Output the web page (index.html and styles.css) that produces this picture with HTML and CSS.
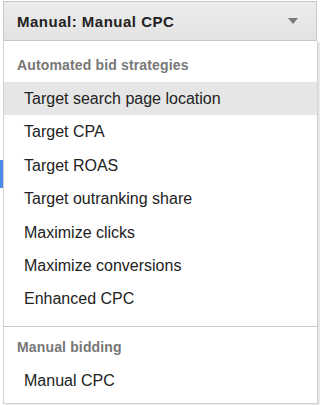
FILE: index.html
```html
<!DOCTYPE html>
<html>
<head>
<meta charset="utf-8">
<link rel="stylesheet" href="styles.css">
</head>
<body>
<div class="page">
  <div class="backdrop-mark"></div>
  <div class="dropdown">
    <div class="select">
      <span class="select-label">Manual: Manual CPC</span>
      <svg class="arrow" width="10" height="6" viewBox="0 0 10 6"><path d="M0 0H10L5 6Z" fill="#7a7a7a"/></svg>
    </div>
    <div class="menu">
      <div class="group-title">Automated bid strategies</div>
      <div class="item active">Target search page location</div>
      <div class="item">Target CPA</div>
      <div class="item">Target ROAS</div>
      <div class="item">Target outranking share</div>
      <div class="item">Maximize clicks</div>
      <div class="item">Maximize conversions</div>
      <div class="item">Enhanced CPC</div>
      <div class="divider"></div>
      <div class="group-title second">Manual bidding</div>
      <div class="item">Manual CPC</div>
    </div>
  </div>
</div>
</body>
</html>
```

FILE: styles.css
```css
html, body {
  margin: 0;
  padding: 0;
  background: #ffffff;
}

.page {
  position: relative;
  width: 320px;
  height: 405px;
  overflow: hidden;
  font-family: "Liberation Sans", Arial, sans-serif;
}

.backdrop-mark {
  position: absolute;
  left: 0;
  top: 160px;
  width: 3px;
  height: 28px;
  background: #4d8ae8;
}

.dropdown {
  position: absolute;
  left: 3px;
  top: 1px;
  width: 315px;
}

.select {
  box-sizing: border-box;
  height: 40px;
  margin-right: 1px;
  display: flex;
  align-items: center;
  justify-content: space-between;
  padding: 0 18px 0 13px;
  background: linear-gradient(#ececec, #e3e3e3);
  border: 1px solid #c9c9c9;
  color: #222;
  font-weight: bold;
  font-size: 15px;
  letter-spacing: 0.5px;
}

.arrow {
  display: block;
}

.menu {
  background: #fff;
  border: 1px solid #d2d2d2;
  border-top: none;
  box-shadow: 2px 1px 2px rgba(0, 0, 0, 0.12);
  padding: 8px 0 6px;
}

.group-title {
  height: 33px;
  line-height: 33px;
  padding-left: 13px;
  color: #777;
  font-weight: bold;
  font-size: 14px;
  letter-spacing: 0.15px;
}

.group-title.second {
  margin-top: 4px;
}

.item {
  height: 33.4px;
  line-height: 33.4px;
  padding-left: 20px;
  color: #222;
  font-size: 16px;
}

.item.active {
  background: #e6e6e6;
}

.divider {
  height: 1px;
  background: #c8c8c8;
  margin-top: 10px;
}
```
